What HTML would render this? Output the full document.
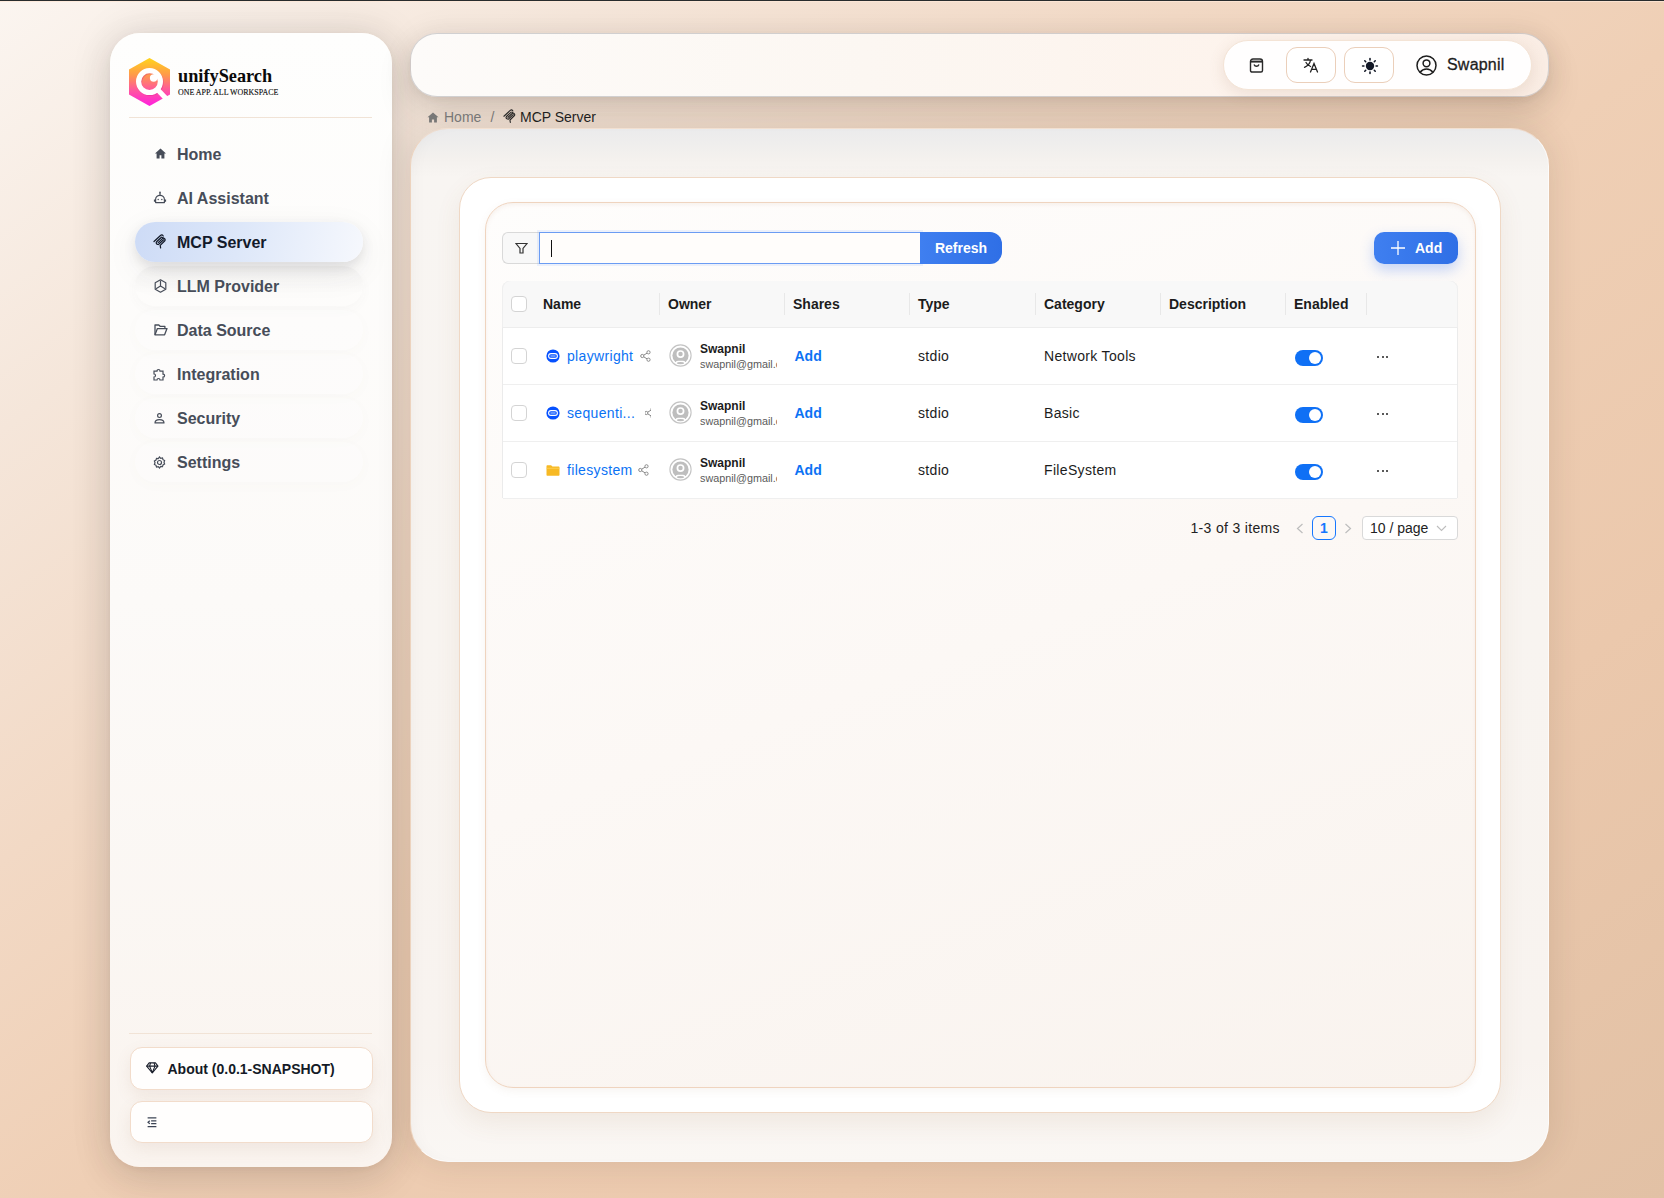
<!DOCTYPE html>
<html><head><meta charset="utf-8">
<style>
*{box-sizing:border-box;margin:0;padding:0}
html,body{width:1664px;height:1198px;overflow:hidden}
body{position:relative;font-family:"Liberation Sans",sans-serif;color:#1f1f1f;
background:linear-gradient(to bottom right,#fbf5f0 0%,#f5e6da 18%,#f2d9c5 36%,#efcfb5 52%,#ebc8ac 75%,#e2c1a5 100%);}
.abs{position:absolute}
.topline{position:absolute;left:0;top:0;width:1664px;height:2px;background:linear-gradient(#282c2d 50%,rgba(255,232,215,0.75) 50%)}
/* sidebar */
.sidebar{position:absolute;left:110px;top:33px;width:282px;height:1134px;border-radius:30px;
background:linear-gradient(180deg,#fefefd 0%,#fcfaf8 50%,#faf4ef 100%);
box-shadow:0 0 40px rgba(40,38,36,0.13),0 14px 40px rgba(60,40,25,0.10),0 2px 6px rgba(40,30,20,0.04);}
.logo-t1{position:absolute;left:67.5px;top:32px;font-family:"Liberation Serif",serif;font-weight:bold;font-size:19px;color:#0a0a0a;white-space:nowrap;transform:scaleX(0.962);transform-origin:0 0}
.logo-t2{position:absolute;left:67.5px;top:54px;font-family:"Liberation Serif",serif;font-size:9px;color:#111;white-space:nowrap;transform:scaleX(0.882);transform-origin:0 0;-webkit-text-stroke:0.15px #111}
.divider{position:absolute;left:19px;width:243px;height:1px;background:#f1e3d6}
.nav{position:absolute;left:25px;width:228px;height:40px;border-radius:20px;}
.nav .ic{position:absolute;left:18px;top:14px;width:13px;height:13px}
.nav .tx{position:absolute;left:42px;top:11px;font-size:16px;font-weight:bold;color:#474d59;white-space:nowrap;line-height:19px}
.nav.active{background:linear-gradient(100deg,#cddbf6 0%,#dde7f9 45%,#f6f8fd 100%);box-shadow:0 5px 12px rgba(60,60,70,0.13),0 10px 34px rgba(60,60,70,0.07)}
.nav.llm{background:linear-gradient(180deg,rgba(0,0,0,0.035),rgba(0,0,0,0.0) 70%);box-shadow:0 4px 12px rgba(80,80,80,0.03)}
.nav.plain{}
.nav.active .tx{color:#131a2a}
.nav.soft{background:rgba(255,255,255,0.2);box-shadow:0 3px 14px rgba(120,110,100,0.025)}
.sbtn{position:absolute;left:19.5px;width:243px;height:42px;border-radius:12px;background:#fffefd;border:1px solid #f2dccb;box-shadow:0 6px 16px rgba(150,110,80,0.10)}
/* header */
.header{position:absolute;left:410px;top:33px;width:1139px;height:64px;border-radius:27px;
background:linear-gradient(90deg,#fdfbf9 0%,#fcf7f2 40%,#fdf3ec 75%,#faede4 100%);border:1px solid rgba(165,165,170,0.5);
box-shadow:0 0 30px rgba(40,38,36,0.08),0 16px 34px rgba(55,40,30,0.14),0 3px 6px rgba(50,35,25,0.05)}
.pill{position:absolute;left:812px;top:6px;width:308.5px;height:49.5px;border-radius:25px;background:#fffefe;border:1px solid #f4e4d6;box-shadow:0 4px 16px rgba(140,100,70,0.14)}
.hbtn{position:absolute;top:6px;width:50px;height:36px;border-radius:11px;border:1px solid #ebcfba;background:#fff}
/* breadcrumb */
.crumb{position:absolute;top:108px;font-size:14px;line-height:18px;white-space:nowrap}
/* main */
.panel{position:absolute;left:410px;top:128px;width:1139px;height:1034px;border-radius:38px;
background:linear-gradient(180deg,#ebebec 0px,#efeeed 15px,#f4f1ee 30px,#f8f5f2 48px,#f8f4f0 500px,#f8f3ef 90%,#faf7f4 100%);
border:1px solid;border-color:rgba(236,205,179,0.55) rgba(255,255,255,0.7) rgba(255,255,255,0.7) #ecd3be;
box-shadow:inset 10px 0 18px -10px rgba(0,0,0,0.045),0 0 34px rgba(60,45,30,0.13)}
.card1{position:absolute;left:459px;top:177px;width:1042px;height:936px;border-radius:32px;background:#fff;border:1px solid #efd8c5;
box-shadow:0 10px 26px rgba(140,95,55,0.09)}
.card2{position:absolute;left:485px;top:202px;width:991px;height:886px;border-radius:28px;border:1px solid #efd4bf;
background:linear-gradient(160deg,#fefdfc 0%,#fcf8f5 50%,#f9f3ee 100%);
box-shadow:inset 0 2px 4px rgba(200,160,130,0.12),0 3px 8px rgba(150,110,80,0.08)}
/* toolbar */
.fbtn{position:absolute;left:502px;top:232px;width:38px;height:32px;border:1px solid #d9d9d9;border-right:none;border-radius:6px 0 0 6px;background:#f8f8f8}
.inp{position:absolute;left:539px;top:232px;width:382px;height:32px;border:1px solid #6b9cf3;background:#fffdfb;box-shadow:0 0 0 2px rgba(80,140,255,0.10)}
.caret{position:absolute;left:551px;top:240px;width:1px;height:17px;background:#111}
.refresh{position:absolute;left:920px;top:232px;width:82px;height:32px;border-radius:0 12px 12px 0;background:linear-gradient(90deg,#3f7ff0,#2f6fe6);color:#fff;font-weight:bold;font-size:14px;line-height:32px;text-align:center}
.addbtn{position:absolute;left:1374px;top:232px;width:84px;height:32px;border-radius:10px;background:linear-gradient(90deg,#3f7ff0,#2f6fe6);color:#fff;font-weight:bold;font-size:14px;line-height:32px;box-shadow:0 6px 14px rgba(50,110,240,0.28)}
/* table */
.table{position:absolute;left:502px;top:281px;width:956px;height:217px;background:#fff;border-radius:8px 8px 0 0;box-shadow:inset 1px 0 0 #ebebeb,inset -1px 0 0 #ebebeb}
.thead{position:absolute;left:0;top:0;width:956px;height:47px;background:#f8f8f8;border-radius:8px 8px 0 0;border-bottom:1px solid #ededed;box-shadow:inset 1px 0 0 #efefef,inset -1px 0 0 #efefef}
.th{position:absolute;top:14.2px;font-size:14px;font-weight:bold;color:#1c1c1c;line-height:18px}
.sep{position:absolute;top:12px;width:1px;height:22px;background:#e8e8e8}
.row{position:absolute;left:1px;width:954px;height:57px;border-bottom:1px solid #efefef}
.cb{position:absolute;width:16px;height:16px;border:1px solid #d4d4d4;border-radius:4px;background:#fff}
.td{position:absolute;font-size:14px;color:#1c1c1c;line-height:18px;white-space:nowrap;letter-spacing:0.33px}
.link{color:#0b72f4}
.sw{position:absolute;width:28px;height:16px;border-radius:8px;background:#0f70f5}
.sw::after{content:"";position:absolute;right:2px;top:2px;width:12px;height:12px;border-radius:50%;background:#fff}
</style></head>
<body>
<div class="topline"></div>

<aside class="sidebar">
  <svg class="abs" style="left:18px;top:24px" width="43" height="50" viewBox="0 0 43 50">
    <defs>
      <linearGradient id="lg" x1="0" y1="0" x2="0" y2="1">
        <stop offset="0" stop-color="#ffd51a"/><stop offset="0.35" stop-color="#ff9a4a"/><stop offset="0.65" stop-color="#ff5a9a"/><stop offset="1" stop-color="#ff1ee0"/>
      </linearGradient>
    </defs>
    <polygon points="21.5,1 42,12.5 42,37.5 21.5,49 1,37.5 1,12.5" fill="url(#lg)"/>
    <circle cx="21.5" cy="24.6" r="10.9" fill="none" stroke="#d8208f" stroke-opacity="0.35" stroke-width="5.4" transform="translate(0.6,0.9)"/>
    <circle cx="21.5" cy="24.6" r="10.9" fill="none" stroke="#fff" stroke-width="5.2"/>
    <line x1="28.5" y1="31.5" x2="37.8" y2="41.2" stroke="#fff" stroke-width="5"/>
    <circle cx="25.6" cy="21" r="3.7" fill="#fff"/>
  </svg>
  <div class="logo-t1">unifySearch</div>
  <div class="logo-t2">ONE APP. ALL WORKSPACE</div>
  <div class="divider" style="top:84px"></div>

  <div class="nav plain" style="top:101px"><svg class="ic" style="top:13.3px;left:18.5px" viewBox="0 0 13 13"><path d="M6.5 1.5L1 6.5h1.6V11.5h3V8.3h1.8v3.2h3V6.5H12z" fill="#474d59"/></svg><div class="tx">Home</div></div>
  <div class="nav plain" style="top:145px"><svg class="ic" style="left:17.5px;top:13px;width:14px;height:14px" viewBox="0 0 14 14" fill="none" stroke="#474d59" stroke-width="1.2"><circle cx="7" cy="1.5" r="0.9" fill="#474d59" stroke="none"/><path d="M7 2v2"/><path d="M2.6 11.6V8.6C2.6 6 4.6 4.3 7 4.3S11.4 6 11.4 8.6v3z" stroke-linejoin="round"/><path d="M1.5 8.6v2.2M12.5 8.6v2.2"/><circle cx="5.2" cy="8.5" r="0.75" fill="#474d59" stroke="none"/><circle cx="8.8" cy="8.5" r="0.75" fill="#474d59" stroke="none"/></svg><div class="tx">AI Assistant</div></div>
  <div class="nav active" style="top:189px"><svg class="abs" style="left:13px;top:8px" width="24" height="24" viewBox="0 0 24 24" fill="none" stroke="#131a2a" stroke-width="1.25" stroke-linecap="round" stroke-linejoin="round"><path d="M6 11.5L12.5 5.5C13.5 4.6 14.6 4.8 15.2 6"/><path d="M14.6 7.6L16 8.4C17.4 9.2 17.4 10.2 16.6 11L12.2 15.4L12.6 17.8"/><path d="M13.5 7.2L8.6 11.8C7.8 12.8 8.2 14 9.6 14.4L10.6 14.5"/><path d="M10.2 12.6L14.8 8.4"/><path d="M11.2 13.8L15.6 9.8"/></svg><div class="tx">MCP Server</div></div>
  <div class="nav llm" style="top:233px"><svg class="ic" style="left:18.5px;top:13px;width:13px;height:14px" viewBox="0 0 13 14" fill="none" stroke="#474d59" stroke-width="1.2"><path d="M6.5 0.8L11.8 3.8V10.2L6.5 13.2L1.2 10.2V3.8z" stroke-linejoin="round"/><path d="M6.5 1.5V7M6.5 7L2 9.8M6.5 7L11 9.8"/></svg><div class="tx">LLM Provider</div></div>
  <div class="nav soft" style="top:277px"><svg class="ic" style="left:18.5px;top:14px;width:14px;height:12px" viewBox="0 0 14 12" fill="none" stroke="#474d59" stroke-width="1.3" stroke-linejoin="round"><path d="M1 10.8V1h3.8l1.3 1.3h4.8v2"/><path d="M1 10.8h9.6l2.4-6.2H3.4z"/></svg><div class="tx">Data Source</div></div>
  <div class="nav soft" style="top:321px"><svg class="ic" viewBox="0 0 13 13" fill="none" stroke="#474d59" stroke-width="1.2"><path d="M5.5 1.5c1 0 1.5.8 1.5 1.6h3v3c.8 0 1.6.6 1.6 1.5S10.8 9.2 10 9.2V12H7c0-.8-.7-1.5-1.5-1.5S4 11.2 4 12H1V9c.8 0 1.5-.6 1.5-1.5S1.8 6 1 6V3.1h3c0-.8.6-1.6 1.5-1.6z"/></svg><div class="tx">Integration</div></div>
  <div class="nav soft" style="top:365px"><svg class="ic" viewBox="0 0 13 13" fill="none" stroke="#474d59" stroke-width="1.2"><circle cx="6.5" cy="3.6" r="1.9"/><path d="M2 10.9c0-2 1.9-3.3 4.5-3.3s4.5 1.3 4.5 3.3z" stroke-linejoin="round"/></svg><div class="tx">Security</div></div>
  <div class="nav soft" style="top:409px"><svg class="ic" viewBox="0 0 13 13" fill="none" stroke="#474d59" stroke-width="1.2"><path d="M6.5 1l1.2 1.3 1.8-.3.5 1.7 1.6.9-.6 1.7.6 1.7-1.6.9-.5 1.7-1.8-.3L6.5 12l-1.2-1.3-1.8.3-.5-1.7-1.6-.9.6-1.7-.6-1.7 1.6-.9.5-1.7 1.8.3z"/><circle cx="6.5" cy="6.5" r="2"/></svg><div class="tx">Settings</div></div>

  <div class="divider" style="top:1000px"></div>
  <div class="sbtn" style="top:1013.7px;height:43px"><svg class="abs" style="left:15.5px;top:14.5px" width="12.6" height="11.7" viewBox="0 0 14 13" fill="none" stroke="#1a1f2b" stroke-width="1.2" stroke-linejoin="round"><path d="M3.5 1h7l2.8 3.6L7 12 .7 4.6z"/><path d="M.7 4.6h12.6M5 1L4 4.6 7 12l3-7.4L9 1"/></svg><div class="abs" style="left:37px;top:12px;font-size:14px;font-weight:bold;color:#141a26;white-space:nowrap;line-height:18px">About (0.0.1-SNAPSHOT)</div></div>
  <div class="sbtn" style="top:1067.7px;height:42.6px"><svg class="abs" style="left:16.5px;top:15.5px" width="10" height="10.5" viewBox="0 0 11 12" fill="none" stroke="#3c4454" stroke-width="1.4"><path d="M0.5 1h10M4.5 4.3h6M4.5 7.6h6M0.5 11h10"/><path d="M3 4.3L1 6l2 1.7"/></svg></div>
</aside>

<header class="header">
  <div class="pill">
    <svg class="abs" style="left:25px;top:16.5px" width="15" height="15" viewBox="0 0 15 15" fill="none" stroke="#2a2a2a" stroke-width="1.4" stroke-linejoin="round"><path d="M1.5 3.5C1.5 2 2.5 1 4 1h7c1.5 0 2.5 1 2.5 2.5V12.5c0 1-.7 1.5-1.5 1.5H3c-.8 0-1.5-.5-1.5-1.5z"/><path d="M1.5 3.6h12" stroke-width="2"/><path d="M5 6.5c.5 1.2 1.3 1.8 2.5 1.8S9.5 7.7 10 6.5"/></svg>
    <div class="hbtn" style="left:62px"><svg class="abs" style="left:16px;top:8.5px" width="17" height="16" viewBox="0 0 17 16" fill="none" stroke="#222" stroke-width="1.3" stroke-linecap="round"><path d="M1 3h8M5 1.3V3M7.6 3C7 6.5 4.5 9 1.5 10.3M3 5.5c1 2 2.6 3.3 4.6 4"/><path d="M7.5 15L11 6.5 14.5 15M8.7 12.3h4.6"/></svg></div>
    <div class="hbtn" style="left:120px"><svg class="abs" style="left:15.5px;top:8.5px" width="18" height="18" viewBox="0 0 18 18" fill="none" stroke="#121826" stroke-width="1.6" stroke-linecap="round"><circle cx="9" cy="9" r="4.2" fill="#121826" stroke="none"/><path d="M9 1.6v1.3M9 15.1v1.3M1.6 9h1.3M15.1 9h1.3M3.8 3.8l.9.9M13.3 13.3l.9.9M3.8 14.2l.9-.9M13.3 4.7l.9-.9"/></svg></div>
    <svg class="abs" style="left:192px;top:14px" width="21" height="21" viewBox="0 0 21 21" fill="none" stroke="#1d1d1d" stroke-width="1.5"><circle cx="10.5" cy="10.5" r="9.5"/><circle cx="10.5" cy="8.3" r="3.4"/><path d="M4.2 17.3c1.4-2 3.6-3.2 6.3-3.2s4.9 1.2 6.3 3.2"/></svg>
    <div class="abs" style="left:223px;top:14px;font-size:16px;color:#1d1d1d;line-height:20px;-webkit-text-stroke:0.3px #1d1d1d;letter-spacing:0.2px">Swapnil</div>
  </div>
</header>

<div class="crumb" style="left:427px;color:#7a7a7a">
<svg class="abs" style="left:0;top:4px" width="12" height="11" viewBox="0 0 12 11"><path d="M6 0.5L0.5 5.3h1.6V10.5h2.8V7.4h2.2v3.1h2.8V5.3h1.6z" fill="#7a7a7a"/></svg>
<span class="abs" style="left:17px;top:0">Home</span>
<span class="abs" style="left:63.5px;top:0">/</span>
<svg class="abs" style="left:74.5px;top:-0.3px" width="15.5" height="15.5" viewBox="4 3 16 16" fill="none" stroke="#2a2a2a" stroke-width="1.2" stroke-linecap="round" stroke-linejoin="round"><path d="M6 11.5L12.5 5.5C13.5 4.6 14.6 4.8 15.2 6"/><path d="M14.6 7.6L16 8.4C17.4 9.2 17.4 10.2 16.6 11L12.2 15.4L12.6 17.8"/><path d="M13.5 7.2L8.6 11.8C7.8 12.8 8.2 14 9.6 14.4L10.6 14.5"/><path d="M10.2 12.6L14.8 8.4"/><path d="M11.2 13.8L15.6 9.8"/></svg>
<span class="abs" style="left:93px;top:0;color:#1f1f1f">MCP Server</span>
</div>
<div class="panel"></div>
<div class="card1"></div>
<div class="card2"></div>

<div class="fbtn"><svg class="abs" style="left:12px;top:9px" width="13" height="13" viewBox="0 0 13 13" fill="none" stroke="#333" stroke-width="1.2"><path d="M1 1.5h11L8 6.5v4.5H5V6.5z"/></svg></div>
<div class="inp"></div>
<div class="caret"></div>
<div class="refresh">Refresh</div>
<div class="addbtn"><svg class="abs" style="left:17px;top:9px" width="14" height="14" viewBox="0 0 14 14" stroke="#fff" stroke-width="1.3"><path d="M7 0v14M0 7h14"/></svg><span class="abs" style="left:41px;top:0">Add</span></div>

<div class="table">
  <div class="thead">
    <div class="cb" style="left:9px;top:15px"></div>
    <div class="th" style="left:41px">Name</div>
    <div class="sep" style="left:157px"></div>
    <div class="th" style="left:166px">Owner</div>
    <div class="sep" style="left:282px"></div>
    <div class="th" style="left:291px">Shares</div>
    <div class="sep" style="left:407px"></div>
    <div class="th" style="left:416px">Type</div>
    <div class="sep" style="left:533px"></div>
    <div class="th" style="left:542px">Category</div>
    <div class="sep" style="left:658px"></div>
    <div class="th" style="left:667px">Description</div>
    <div class="sep" style="left:783px"></div>
    <div class="th" style="left:792px">Enabled</div>
    <div class="sep" style="left:864px"></div>
  </div>
  <!-- rows added below -->
  <div class="row" style="top:47px">
    <div class="cb" style="left:8px;top:20px"></div>
    <svg class="abs" style="left:43px;top:21px" width="14" height="14" viewBox="0 0 14 14"><circle cx="7" cy="7" r="6.6" fill="#0651ff"/><rect x="2.6" y="4.6" width="8.8" height="4.8" rx="2.4" fill="none" stroke="#fff" stroke-width="1.1"/><rect x="4.2" y="6.2" width="5.6" height="1.6" rx="0.8" fill="#7fa8ff"/></svg>
    <div class="td link" style="left:64px;top:19px">playwright</div>
    <svg class="abs" style="left:137px;top:22px" width="11" height="12" viewBox="0 0 11 12" fill="none" stroke="#8a8a8a" stroke-width="1"><circle cx="8.5" cy="2.3" r="1.6"/><circle cx="2.3" cy="6" r="1.6"/><circle cx="8.5" cy="9.7" r="1.6"/><path d="M3.8 5.1L7 3.2M3.8 6.9L7 8.8"/></svg>
    <svg class="abs" style="left:165.7px;top:16.3px" width="23" height="23" viewBox="0 0 23 23"><circle cx="11.5" cy="11.5" r="10.6" fill="#fff"/><circle cx="11.5" cy="11.5" r="8.1" fill="#bebebe"/><circle cx="11.5" cy="10.1" r="3.1" fill="#bebebe" stroke="#fff" stroke-width="1.7"/><rect x="6.6" y="16.7" width="9.8" height="4.6" rx="2.3" fill="#fff"/><ellipse cx="11.5" cy="19.1" rx="3.6" ry="1.2" fill="#bebebe"/><circle cx="11.5" cy="11.5" r="10.6" fill="none" stroke="#c4c4c4" stroke-width="1.1"/></svg>
    <div class="td" style="left:197px;top:13.5px;font-size:12px;font-weight:bold;line-height:15px;letter-spacing:0">Swapnil</div>
    <div class="abs" style="left:197px;top:29px;width:77px;overflow:hidden;font-size:10.8px;color:#5a5a5a;line-height:14px;white-space:nowrap">swapnil@gmail.com</div>
    <div class="td link" style="left:291.5px;top:19px;font-weight:bold;letter-spacing:0">Add</div>
    <div class="td" style="left:415px;top:19px">stdio</div>
    <div class="td" style="left:541px;top:19px">Network Tools</div>
    <div class="sw" style="left:792px;top:22px"></div>
    <div class="abs" style="left:874px;top:20px;width:12px;height:3px"><i class="abs" style="left:0;top:8px;width:2px;height:2px;background:#222;border-radius:1px"></i><i class="abs" style="left:4.5px;top:8px;width:2px;height:2px;background:#222;border-radius:1px"></i><i class="abs" style="left:9px;top:8px;width:2px;height:2px;background:#222;border-radius:1px"></i></div>
  </div>
<div class="row" style="top:104px">
    <div class="cb" style="left:8px;top:20px"></div>
    <svg class="abs" style="left:43px;top:21px" width="14" height="14" viewBox="0 0 14 14"><circle cx="7" cy="7" r="6.6" fill="#0651ff"/><rect x="2.6" y="4.6" width="8.8" height="4.8" rx="2.4" fill="none" stroke="#fff" stroke-width="1.1"/><rect x="4.2" y="6.2" width="5.6" height="1.6" rx="0.8" fill="#7fa8ff"/></svg>
    <div class="td link" style="left:64px;top:19px">sequenti...</div>
    <div class="abs" style="left:142px;top:22px;width:6px;height:12px;overflow:hidden"><svg class="abs" style="left:-1px;top:0" width="11" height="12" viewBox="0 0 11 12" fill="none" stroke="#8a8a8a" stroke-width="1"><circle cx="8.5" cy="2.3" r="1.6"/><circle cx="2.3" cy="6" r="1.6"/><circle cx="8.5" cy="9.7" r="1.6"/><path d="M3.8 5.1L7 3.2M3.8 6.9L7 8.8"/></svg></div>
    <svg class="abs" style="left:165.7px;top:16.3px" width="23" height="23" viewBox="0 0 23 23"><circle cx="11.5" cy="11.5" r="10.6" fill="#fff"/><circle cx="11.5" cy="11.5" r="8.1" fill="#bebebe"/><circle cx="11.5" cy="10.1" r="3.1" fill="#bebebe" stroke="#fff" stroke-width="1.7"/><rect x="6.6" y="16.7" width="9.8" height="4.6" rx="2.3" fill="#fff"/><ellipse cx="11.5" cy="19.1" rx="3.6" ry="1.2" fill="#bebebe"/><circle cx="11.5" cy="11.5" r="10.6" fill="none" stroke="#c4c4c4" stroke-width="1.1"/></svg>
    <div class="td" style="left:197px;top:13.5px;font-size:12px;font-weight:bold;line-height:15px;letter-spacing:0">Swapnil</div>
    <div class="abs" style="left:197px;top:29px;width:77px;overflow:hidden;font-size:10.8px;color:#5a5a5a;line-height:14px;white-space:nowrap">swapnil@gmail.com</div>
    <div class="td link" style="left:291.5px;top:19px;font-weight:bold;letter-spacing:0">Add</div>
    <div class="td" style="left:415px;top:19px">stdio</div>
    <div class="td" style="left:541px;top:19px">Basic</div>
    <div class="sw" style="left:792px;top:22px"></div>
    <div class="abs" style="left:874px;top:20px;width:12px;height:3px"><i class="abs" style="left:0;top:8px;width:2px;height:2px;background:#222;border-radius:1px"></i><i class="abs" style="left:4.5px;top:8px;width:2px;height:2px;background:#222;border-radius:1px"></i><i class="abs" style="left:9px;top:8px;width:2px;height:2px;background:#222;border-radius:1px"></i></div>
  </div>
<div class="row" style="top:161px">
    <div class="cb" style="left:8px;top:20px"></div>
    <svg class="abs" style="left:43px;top:22px" width="14" height="13" viewBox="0 0 14 13"><path d="M0.5 2.2c0-.6.4-1 1-1h3.6l1.3 1.4h6.1c.6 0 1 .4 1 1v7.2c0 .6-.4 1-1 1H1.5c-.6 0-1-.4-1-1z" fill="#f7b924"/><path d="M0.5 4.3h13" stroke="#ffd35a" stroke-width="0.8"/></svg>
    <div class="td link" style="left:64px;top:19px">filesystem</div>
    <svg class="abs" style="left:135px;top:22px" width="11" height="12" viewBox="0 0 11 12" fill="none" stroke="#8a8a8a" stroke-width="1"><circle cx="8.5" cy="2.3" r="1.6"/><circle cx="2.3" cy="6" r="1.6"/><circle cx="8.5" cy="9.7" r="1.6"/><path d="M3.8 5.1L7 3.2M3.8 6.9L7 8.8"/></svg>
    <svg class="abs" style="left:165.7px;top:16.3px" width="23" height="23" viewBox="0 0 23 23"><circle cx="11.5" cy="11.5" r="10.6" fill="#fff"/><circle cx="11.5" cy="11.5" r="8.1" fill="#bebebe"/><circle cx="11.5" cy="10.1" r="3.1" fill="#bebebe" stroke="#fff" stroke-width="1.7"/><rect x="6.6" y="16.7" width="9.8" height="4.6" rx="2.3" fill="#fff"/><ellipse cx="11.5" cy="19.1" rx="3.6" ry="1.2" fill="#bebebe"/><circle cx="11.5" cy="11.5" r="10.6" fill="none" stroke="#c4c4c4" stroke-width="1.1"/></svg>
    <div class="td" style="left:197px;top:13.5px;font-size:12px;font-weight:bold;line-height:15px;letter-spacing:0">Swapnil</div>
    <div class="abs" style="left:197px;top:29px;width:77px;overflow:hidden;font-size:10.8px;color:#5a5a5a;line-height:14px;white-space:nowrap">swapnil@gmail.com</div>
    <div class="td link" style="left:291.5px;top:19px;font-weight:bold;letter-spacing:0">Add</div>
    <div class="td" style="left:415px;top:19px">stdio</div>
    <div class="td" style="left:541px;top:19px">FileSystem</div>
    <div class="sw" style="left:792px;top:22px"></div>
    <div class="abs" style="left:874px;top:20px;width:12px;height:3px"><i class="abs" style="left:0;top:8px;width:2px;height:2px;background:#222;border-radius:1px"></i><i class="abs" style="left:4.5px;top:8px;width:2px;height:2px;background:#222;border-radius:1px"></i><i class="abs" style="left:9px;top:8px;width:2px;height:2px;background:#222;border-radius:1px"></i></div>
  </div>
</div>

<div class="abs" style="left:1190.5px;top:519px;font-size:14px;color:#222;line-height:18px;letter-spacing:0.33px">1-3 of 3 items</div>
<svg class="abs" style="left:1296px;top:523px" width="8" height="11" viewBox="0 0 8 11" fill="none" stroke="#bdbdbd" stroke-width="1.2"><path d="M6.5 1L1.5 5.5L6.5 10"/></svg>
<div class="abs" style="left:1312px;top:516px;width:24px;height:24px;border:1px solid #1677ff;border-radius:6px;color:#1677ff;font-weight:bold;font-size:14px;line-height:22px;text-align:center">1</div>
<svg class="abs" style="left:1344px;top:523px" width="8" height="11" viewBox="0 0 8 11" fill="none" stroke="#bdbdbd" stroke-width="1.2"><path d="M1.5 1L6.5 5.5L1.5 10"/></svg>
<div class="abs" style="left:1362px;top:516px;width:96px;height:24px;border:1px solid #d9d9d9;border-radius:4px;background:#fff"><span class="abs" style="left:7px;top:2px;font-size:14px;color:#222;line-height:18px;white-space:nowrap">10 / page</span><svg class="abs" style="left:73px;top:8px" width="11" height="7" viewBox="0 0 11 7" fill="none" stroke="#bdbdbd" stroke-width="1.1"><path d="M1 1l4.5 4.5L10 1"/></svg></div>

</body></html>
